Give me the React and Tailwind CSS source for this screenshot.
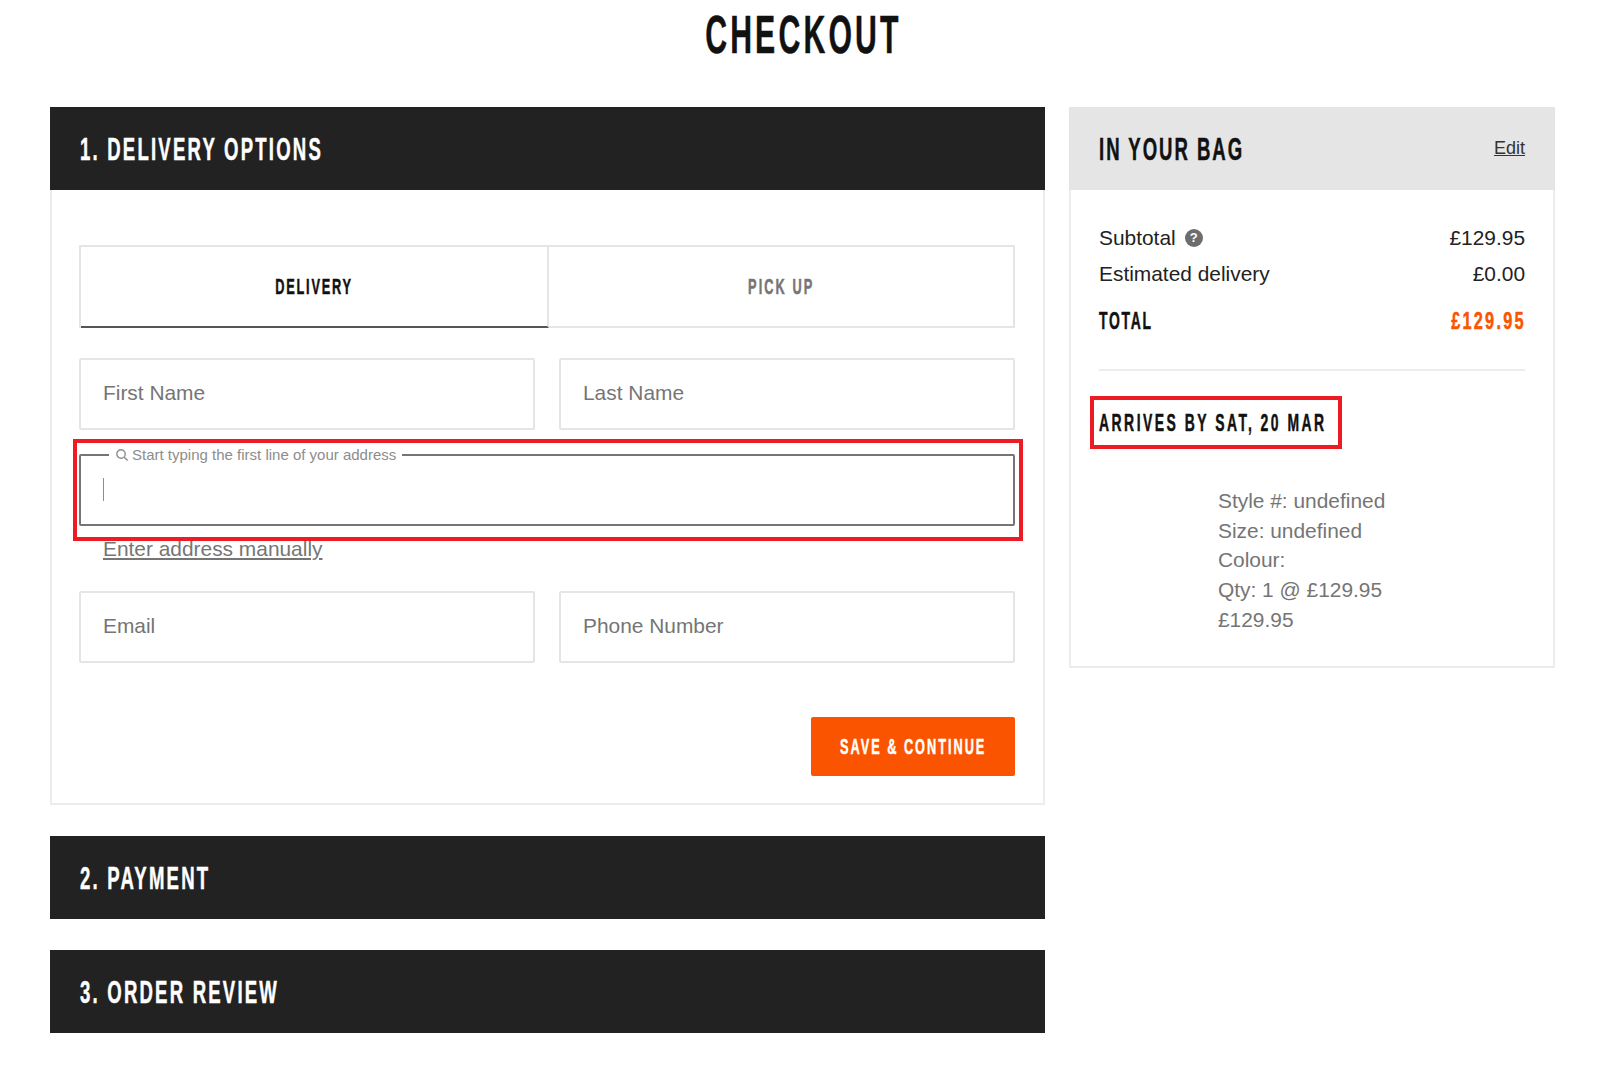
import React from 'react';

// no condensed face is installed, so squeeze Liberation Sans Bold horizontally
function Cond({ className, children }) {
  return (
    <span className={`inline-block whitespace-nowrap font-['Liberation_Sans',Arial,sans-serif] font-bold [-webkit-text-stroke:0.5px_currentColor] ${className}`}>
      {children}
    </span>
  );
}

function SectionBar({ title }) {
  return (
    <div className="flex h-[83px] items-center bg-[#222222] px-[30px]">
      <h2>
        <Cond className="origin-left scale-x-[0.58] text-[32px] tracking-[3.8px] text-white">{title}</Cond>
      </h2>
    </div>
  );
}

function Field({ placeholder }) {
  return (
    <div className="flex h-[72px] flex-1 items-center rounded-[2px] border-2 border-[#e5e5e5] px-[22px] pb-[2px] text-[20.9px] text-[#757575]">
      {placeholder}
    </div>
  );
}

export default function App() {
  return (
    <div className="min-h-screen bg-white font-['Liberation_Sans',Arial,sans-serif]">
      <h1 className="flex h-[107px] justify-center pt-[3px] pl-[7px] leading-[62px]">
        <Cond className="scale-x-[0.56] text-[54px] tracking-[5.6px] text-[#111111]">CHECKOUT</Cond>
      </h1>

      <div className="flex items-start gap-[24px] pl-[50px] pr-[45px]">
        {/* Left column */}
        <div className="flex w-[995px] flex-col gap-[31px]">
          <div>
            <SectionBar title="1. DELIVERY OPTIONS" />
            <div className="border-2 border-t-0 border-[#ececec] pt-[55px] pr-[28px] pb-[27px] pl-[27px]">
              <div className="flex h-[83px] border-2 border-b-0 border-[#e5e5e5]">
                <div className="flex w-[468px] items-center justify-center border-r-2 border-b-2 border-r-[#e5e5e5] border-b-[#555555]">
                  <Cond className="scale-x-[0.58] text-[22px] tracking-[3.1px] text-[#111111]">DELIVERY</Cond>
                </div>
                <div className="flex flex-1 items-center justify-center border-b-2 border-[#e5e5e5]">
                  <Cond className="scale-x-[0.58] text-[22px] tracking-[3.6px] text-[#757575]">PICK UP</Cond>
                </div>
              </div>

              <div className="mt-[30px] flex gap-[24px]">
                <Field placeholder="First Name" />
                <Field placeholder="Last Name" />
              </div>

              {/* Address search */}
              <div className="relative mt-[24px] h-[72px] rounded-[2px] border-2 border-[#757575] px-[22px]">
                <div className="absolute top-[-10px] left-[28px] flex items-center gap-[3px] bg-white px-[6px] text-[15px] leading-[17px] text-[#8d8d8d]">
                  <svg width="14" height="14" viewBox="0 0 14 14" fill="none" stroke="#8d8d8d" strokeWidth="1.4">
                    <circle cx="6" cy="6" r="4.2" />
                    <path d="M9.2 9.2 L12.6 12.6" />
                  </svg>
                  Start typing the first line of your address
                </div>
                <div className="mt-[22px] h-[23px] w-[1px] bg-[#8d8d8d]" />
                <div className="absolute -top-[17px] -right-[10px] -bottom-[17px] -left-[8px] border-[4px] border-[#ed1c24]" />
              </div>

              <a className="mt-[11px] ml-[24px] block text-[20.9px] leading-[24px] text-[#757575] underline">
                Enter address manually
              </a>

              <div className="mt-[30px] flex gap-[24px]">
                <Field placeholder="Email" />
                <Field placeholder="Phone Number" />
              </div>

              <div className="mt-[54px] flex justify-end">
                <button className="flex h-[59px] w-[204px] items-center justify-center rounded-[2px] bg-[#fa5400]">
                  <Cond className="scale-x-[0.58] text-[22px] tracking-[3.4px] text-white">SAVE &amp; CONTINUE</Cond>
                </button>
              </div>
            </div>
          </div>

          <SectionBar title="2. PAYMENT" />
          <SectionBar title="3. ORDER REVIEW" />
        </div>

        {/* Bag summary */}
        <div className="w-[486px] border-2 border-t-0 border-[#ececec]">
          <div className="-mx-[2px] flex h-[83px] items-center justify-between bg-[#e5e5e5] px-[30px]">
            <h2>
              <Cond className="origin-left scale-x-[0.58] text-[32px] tracking-[3.4px] text-[#111111]">IN YOUR BAG</Cond>
            </h2>
            <a className="text-[18px] text-[#333333] underline">Edit</a>
          </div>

          <div className="px-[28px] pt-[30px] pb-[31px]">
            <div className="flex h-[36px] items-center justify-between text-[20.9px] text-[#222222]">
              <div className="flex items-center gap-[9px]">
                Subtotal
                <span className="flex h-[18px] w-[18px] items-center justify-center rounded-full bg-[#6d6d6d] text-[13px] font-bold text-white">?</span>
              </div>
              <span>£129.95</span>
            </div>
            <div className="flex h-[36px] items-center justify-between text-[20.9px] text-[#222222]">
              <span>Estimated delivery</span>
              <span>£0.00</span>
            </div>
            <div className="mt-[11px] flex h-[36px] items-center justify-between">
              <Cond className="origin-left scale-x-[0.58] text-[24px] tracking-[3px] text-[#111111]">TOTAL</Cond>
              <Cond className="-mr-[1px] origin-right scale-x-[0.68] text-[24px] tracking-[3.3px] text-[#fa5400]">£129.95</Cond>
            </div>
            <div className="mt-[30px] h-[2px] bg-[#ececec]" />

            <div className="mt-[25px] -ml-[9px] flex h-[53px] w-[252px] items-center border-[4px] border-[#ed1c24] pl-[5px]">
              <Cond className="origin-left scale-x-[0.58] text-[24px] tracking-[4.3px] text-[#111111]">ARRIVES BY SAT, 20 MAR</Cond>
            </div>

            <div className="mt-[37px] ml-[119px] text-[20.9px] leading-[29.7px] text-[#757575]">
              <div>Style #: undefined</div>
              <div>Size: undefined</div>
              <div>Colour:</div>
              <div>Qty: 1 @ £129.95</div>
              <div>£129.95</div>
            </div>
          </div>
        </div>
      </div>
    </div>
  );
}
